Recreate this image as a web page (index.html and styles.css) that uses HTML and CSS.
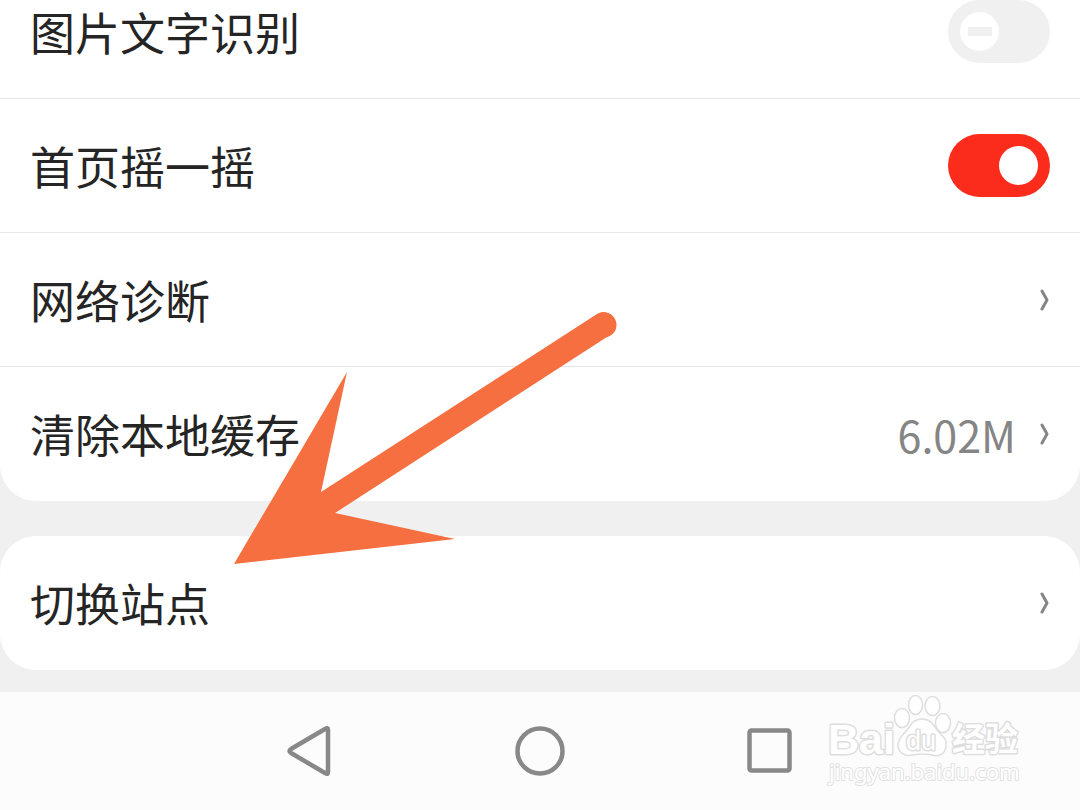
FILE: index.html
```
<!DOCTYPE html>
<html lang="zh-CN">
<head>
    <meta charset="UTF-8">
    <title>设置</title>
    <meta name="viewport" content="width=device-width, initial-scale=1.0">
    <link rel="stylesheet" href="styles.css">
</head>
<body>

    <main class="settings">
        <!-- General settings -->
        <section class="card card-first">
            <div class="row">
                <label class="title" for="ocr">图片文字识别</label>
                <input class="switch" type="checkbox" id="ocr">
            </div>
            <div class="row">
                <label class="title" for="shake">首页摇一摇</label>
                <input class="switch" type="checkbox" id="shake" checked>
            </div>
            <a class="row" href="#network">
                <span class="title">网络诊断</span>
                <svg class="chevron" viewBox="0 0 10 22"><path d="M2 2L7 11L2 20"/></svg>
            </a>
            <a class="row" href="#cache">
                <span class="title">清除本地缓存</span>
                <span class="value">6.02M</span>
                <svg class="chevron" viewBox="0 0 10 22"><path d="M2 2L7 11L2 20"/></svg>
            </a>
        </section>

        <!-- Site -->
        <section class="card">
            <a class="row" href="#site">
                <span class="title">切换站点</span>
                <svg class="chevron" viewBox="0 0 10 22"><path d="M2 2L7 11L2 20"/></svg>
            </a>
        </section>
    </main>

    <!-- System navigation -->
    <nav class="navbar">
        <button type="button" aria-label="返回">
            <svg viewBox="0 0 52 52"><path d="M41 4Q44 2 44 5V47Q44 50 41 48L7 28Q4 26 7 24Z"/></svg>
        </button>
        <button type="button" aria-label="主页">
            <svg viewBox="0 0 52 52"><circle cx="26" cy="26" r="22.5"/></svg>
        </button>
        <button type="button" aria-label="最近任务">
            <svg viewBox="0 0 52 52"><rect x="5.5" y="5.5" width="40" height="40" rx="2"/></svg>
        </button>
    </nav>

    <!-- Arrow pointing at the last row -->
    <svg class="arrow" viewBox="0 0 384 252">
        <path d="M0 252L113 60L87 180L363 2A12 12 0 0 1 376 23L101 201L221 227Z"/>
        <circle cx="370" cy="13" r="12.5"/>
    </svg>

    <!-- Watermark -->
    <svg class="watermark" viewBox="0 0 200 96">
        <text class="brand" x="3" y="62">Bai</text>
        <ellipse cx="77" cy="26" rx="7.5" ry="9.5"/>
        <ellipse cx="90.5" cy="13" rx="7" ry="9.5"/>
        <ellipse cx="107.5" cy="14" rx="7.5" ry="9.5"/>
        <ellipse cx="118" cy="31" rx="7.5" ry="9.5"/>
        <path d="M97 27C105 27 108 32 112 38C117 44 122 46 121 54C120 63 113 65 107 63Q97 61 88 63C79 65 73 60 73 53C73 46 78 43 82 38C86 32 89 27 97 27Z"/>
        <text class="du" x="81" y="58">du</text>
        <text class="cjk" x="127" y="59">经验</text>
        <text class="url" x="4" y="88">jingyan.baidu.com</text>
    </svg>

</body>
</html>
```

FILE: styles.css
```
/* General Styles */
* {
    box-sizing: border-box;
}

body {
    position: relative;
    display: flex;
    flex-direction: column;
    min-height: 100vh;
    margin: 0;
    font-family: "Noto Sans CJK SC", "Noto Sans", sans-serif;
    color: #252525;
    background-color: #f0f0f0;
    overflow-x: hidden;
}

/* Settings list */
.settings {
    flex: 1;
    display: flex;
    flex-direction: column;
    gap: 35px;
    padding-bottom: 22px;
}

.card {
    background-color: #fff;
    border-radius: 36px;
    overflow: hidden;
}

/* list is scrolled a little, first row is cut */
.card-first {
    margin-top: -35px;
}

.row {
    display: flex;
    align-items: center;
    height: 134px;
    padding: 0 30px;
    border-bottom: 1px solid #e6e6e6;
    color: inherit;
    text-decoration: none;
}

.row:last-child {
    border-bottom: none;
}

.title {
    flex: 1;
    font-size: 45px;
    line-height: 64px;
}

.value {
    margin-right: 24px;
    font-size: 43px;
    line-height: 64px;
    color: #858585;
}

.chevron {
    width: 10px;
    height: 22px;
    fill: none;
    stroke: #858585;
    stroke-width: 3;
    stroke-linecap: round;
    stroke-linejoin: round;
}

/* Switch */
.switch {
    appearance: none;
    position: relative;
    width: 102px;
    height: 63px;
    margin: 0;
    border-radius: 32px;
    background-color: #f0f0f0;
}

.switch::before {
    content: "";
    position: absolute;
    top: 12px;
    left: 12px;
    width: 39px;
    height: 39px;
    border-radius: 50%;
    background: linear-gradient(#f0f0f0, #f0f0f0) center / 24px 9px no-repeat #fff;
}

.switch:checked {
    background-color: #fb2c1b;
}

.switch:checked::before {
    left: 51px;
    background: #fff;
}

/* Navigation bar */
.navbar {
    display: flex;
    justify-content: center;
    height: 118px;
    background-color: #fcfcfc;
}

.navbar button {
    display: flex;
    align-items: center;
    justify-content: center;
    width: 230px;
    padding: 0;
    border: none;
    background: none;
}

.navbar svg {
    width: 52px;
    height: 52px;
    fill: none;
    stroke: #888;
    stroke-width: 4.5;
    stroke-linejoin: round;
}

/* Arrow */
.arrow {
    position: absolute;
    top: 312px;
    left: 234px;
    width: 384px;
    height: 252px;
    fill: #f56f40;
    overflow: visible;
    pointer-events: none;
}

/* Watermark */
.watermark {
    position: absolute;
    right: 55px;
    bottom: 22px;
    width: 200px;
    height: 96px;
    overflow: visible;
    fill: #fff;
    stroke: #dedede;
    stroke-width: 1.5;
    pointer-events: none;
}

.watermark text {
    paint-order: stroke;
    stroke-width: 3;
    stroke-linejoin: round;
}

.brand {
    font: bold 43px "Liberation Sans", sans-serif;
}

.du {
    font: 27px "Liberation Sans", sans-serif;
}

.cjk {
    font: bold 33px "Noto Sans CJK SC", sans-serif;
}

.watermark .url {
    font: 22px "Noto Sans", sans-serif;
    stroke: #e2e2e2;
    stroke-width: 2;
}
```
